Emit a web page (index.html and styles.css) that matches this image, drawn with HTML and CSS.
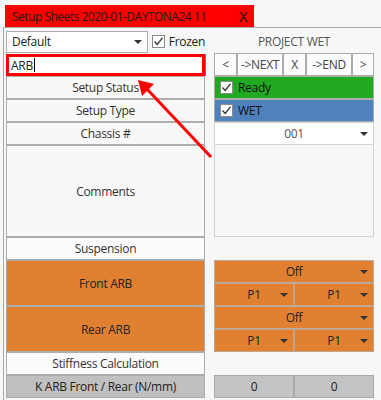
FILE: index.html
```html
<!DOCTYPE html>
<html>
<head>
<meta charset="utf-8">
<link rel="stylesheet" href="styles.css">
</head>
<body>
<div class="win">
  <div class="tabstrip">
    <div class="tab"><span class="tab-title">Setup Sheets 2020-01-DAYTONA24 11</span><span class="tab-close">X</span></div>
  </div>
  <div class="panel">
    <div class="grid">
      <div class="combo-row">
        <div class="combo"><span>Default</span><i class="caret"></i></div>
        <div class="chk"><span class="box"><svg width="11" height="11" viewBox="0 0 11 11"><path d="M1.5 5.5 L4.2 8.5 L9.5 1.8" fill="none" stroke="#333" stroke-width="1.3"/></svg></span><span>Frozen</span></div>
      </div>
      <div class="proj">PROJECT WET</div>

      <div class="search"><span>ARB</span><span class="cursor"></span></div>
      <div class="nav">
        <div class="nb nb-s">&lt;</div>
        <div class="nb nb-l">-&gt;NEXT</div>
        <div class="nb nb-s">X</div>
        <div class="nb nb-l">-&gt;END</div>
        <div class="nb nb-e">&gt;</div>
      </div>

      <div class="lbl">Setup Status</div>
      <div class="status ready"><span class="box"><svg width="11" height="11" viewBox="0 0 11 11"><path d="M1.5 5.5 L4.2 8.5 L9.5 1.8" fill="none" stroke="#333" stroke-width="1.3"/></svg></span><span>Ready</span></div>

      <div class="lbl">Setup Type</div>
      <div class="status wet"><span class="box"><svg width="11" height="11" viewBox="0 0 11 11"><path d="M1.5 5.5 L4.2 8.5 L9.5 1.8" fill="none" stroke="#333" stroke-width="1.3"/></svg></span><span>WET</span></div>

      <div class="lbl">Chassis #</div>
      <div class="dd white"><span>001</span><i class="caret"></i></div>

      <div class="lbl">Comments</div>
      <div class="memo"></div>

      <div class="lbl sec">Suspension</div>
      <div class="blank"></div>

      <div class="lbl orange">Front ARB</div>
      <div class="arb">
        <div class="dd or full"><span>Off</span><i class="caret"></i></div>
        <div class="dd or"><span>P1</span><i class="caret"></i></div>
        <div class="dd or"><span>P1</span><i class="caret"></i></div>
      </div>

      <div class="lbl orange">Rear ARB</div>
      <div class="arb">
        <div class="dd or full"><span>Off</span><i class="caret"></i></div>
        <div class="dd or"><span>P1</span><i class="caret"></i></div>
        <div class="dd or"><span>P1</span><i class="caret"></i></div>
      </div>

      <div class="lbl sec">Stiffness Calculation</div>
      <div class="blank"></div>

      <div class="lbl grey">K ARB Front / Rear (N/mm)</div>
      <div class="vals">
        <div class="val">0</div>
        <div class="val">0</div>
      </div>
    </div>
  </div>
  <svg class="arrow" width="381" height="400" viewBox="0 0 381 400">
    <line x1="211" y1="157" x2="146" y2="88" stroke="#f00" stroke-width="3"/>
    <polygon points="138,80 154,84 142,96" fill="#f00"/>
  </svg>
</div>
</body>
</html>
```
FILE: styles.css
```css
html, body {
  margin: 0;
  padding: 0;
  background: #f7f7f7;
}
body {
  font-family: "Open Sans", "Noto Sans", sans-serif;
  font-size: 12px;
  letter-spacing: -0.3px;
  color: #333;
}
.win {
  position: relative;
  width: 381px;
  height: 400px;
  overflow: hidden;
}
.tabstrip {
  height: 27px;
  padding: 5px 0 0 5px;
  box-sizing: border-box;
}
.tab {
  width: 249px;
  height: 22px;
  background: #ff0000;
  display: flex;
  align-items: center;
  box-sizing: border-box;
  padding: 0 7px;
  color: #1a1a1a;
  font-size: 12px;
  white-space: nowrap;
}
.tab-title { flex: none; letter-spacing: -0.5px; }
.tab-close {
  margin-left: auto;
  font-size: 14px;
  color: #000;
}
.panel {
  margin-left: 3px;
  border-top: 1px solid #a8a8a8;
  border-left: 1px solid #a8a8a8;
  padding: 2px 0 0 2px;
  height: 372px;
}
.grid {
  display: grid;
  grid-template-columns: 199px 160px;
  column-gap: 9px;
  grid-template-rows: 23px 23px 23px 23px 23px 92px 23px 46px 46px 23px 23px;
}
.combo-row {
  display: flex;
  align-items: center;
}
.combo {
  width: 142px;
  height: 22px;
  box-sizing: border-box;
  border: 1px solid #acacac;
  background: #fff;
  display: flex;
  align-items: center;
  padding-left: 5px;
  position: relative;
  color: #222;
}
.caret {
  position: absolute;
  right: 5px;
  top: 50%;
  margin-top: -2px;
  width: 0;
  height: 0;
  border-left: 4px solid transparent;
  border-right: 4px solid transparent;
  border-top: 4px solid #333;
}
.chk {
  display: flex;
  align-items: center;
  margin-left: 4px;
  gap: 4px;
  color: #222;
}
.box {
  width: 13px;
  height: 13px;
  box-sizing: border-box;
  border: 1px solid #8a8a8a;
  background: #fff;
  display: flex;
  align-items: center;
  justify-content: center;
}
.proj {
  display: flex;
  align-items: center;
  justify-content: center;
  color: #555;
}
.search {
  margin-top: 1px;
  height: 22px;
  box-sizing: border-box;
  border: 3px solid #ff0000;
  box-shadow: 1px 0 0 #3c7fc1;
  background: #fff;
  display: flex;
  align-items: center;
  padding-left: 2px;
  color: #222;
}
.cursor {
  width: 1px;
  height: 14px;
  background: #000;
  margin-left: 1px;
}
.nav {
  display: flex;
}
.nb {
  box-sizing: border-box;
  border: 1px solid #ababab;
  background: #fcfcfc;
  display: flex;
  align-items: center;
  justify-content: center;
  color: #444;
  white-space: nowrap;
}
.nb-s { width: 23px; }
.nb-l { width: 46px; }
.nb-e { width: 22px; }
.lbl {
  box-sizing: border-box;
  border: 1px solid #acacac;
  background: #f8f8f8;
  display: flex;
  align-items: center;
  justify-content: center;
  color: #333;
}
.lbl.sec { background: #fbfbfb; }
.lbl.orange { background: #e28031; color: #222; }
.lbl.grey { background: #c0c0c0; color: #222; }
.status {
  box-sizing: border-box;
  border: 1px solid #acacac;
  display: flex;
  align-items: center;
  padding-left: 5px;
  gap: 5px;
  color: #111;
}
.ready { background: #22a922; }
.wet { background: #4f81bd; }
.dd {
  position: relative;
  box-sizing: border-box;
  display: flex;
  align-items: center;
  justify-content: center;
}
.white {
  background: #fff;
  border: 1px solid #d4d4d4;
  color: #555;
}
.memo {
  border: 1px solid #d2d2d2;
  border-top: none;
  background: #f7f7f7;
}
.arb {
  display: grid;
  grid-template-columns: 80px 80px;
  grid-template-rows: 23px 23px;
}
.or {
  background: #e28031;
  border: 1px solid #c4a284;
  color: #222;
}
.or.full { grid-column: 1 / 3; border-color: #b8aea4; }
.vals {
  display: grid;
  grid-template-columns: 80px 80px;
}
.val {
  box-sizing: border-box;
  background: #c4c4c4;
  border: 1px solid #aaaaaa;
  display: flex;
  align-items: center;
  justify-content: center;
  color: #222;
}
.arrow {
  position: absolute;
  left: 0;
  top: 0;
  pointer-events: none;
}
```
